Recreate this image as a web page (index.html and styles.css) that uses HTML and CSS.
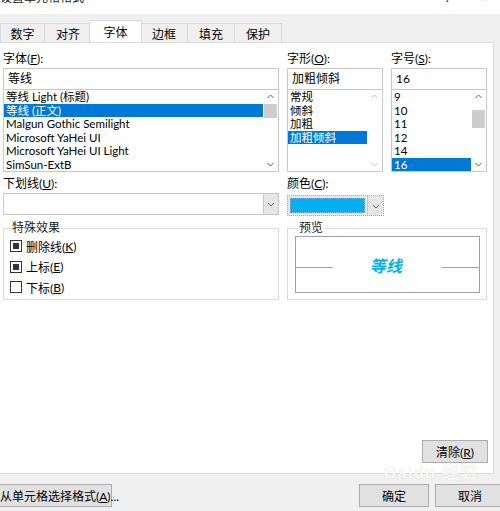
FILE: index.html
```html
<!DOCTYPE html>
<html lang="zh-CN">
<head>
<meta charset="utf-8">
<link rel="stylesheet" href="styles.css">
</head>
<body>
<div class="dialog">
  <div class="titlebar">
    <span class="title">设置单元格格式</span>
    <span class="tb-icons"><span class="help">?</span><span class="close">×</span></span>
  </div>
  <div class="tabstrip">
    <div class="tab">数字</div>
    <div class="tab">对齐</div>
    <div class="tab active">字体</div>
    <div class="tab">边框</div>
    <div class="tab">填充</div>
    <div class="tab">保护</div>
  </div>
  <div class="panel">
    <div class="row1">
      <div class="col">
        <div class="label">字体(<u>F</u>):</div>
        <div class="input">等线</div>
        <div class="list">
          <div class="items">
            <div class="item">等线 Light (标题)</div>
            <div class="item sel">等线 (正文)</div>
            <div class="item">Malgun Gothic Semilight</div>
            <div class="item">Microsoft YaHei UI</div>
            <div class="item">Microsoft YaHei UI Light</div>
            <div class="item">SimSun-ExtB</div>
          </div>
          <div class="scroll">
            <svg class="arr" width="15" height="13" viewBox="0 0 15 13"><polyline points="4.5,8 7.5,5 10.5,8" fill="none" stroke="#606060" stroke-width="1"/></svg>
            <div class="track"><div class="thumb t-font"></div></div>
            <svg class="arr" width="15" height="13" viewBox="0 0 15 13"><polyline points="4.5,5 7.5,8 10.5,5" fill="none" stroke="#606060" stroke-width="1"/></svg>
          </div>
        </div>
      </div>
      <div class="col">
        <div class="label">字形(<u>O</u>):</div>
        <div class="input">加粗倾斜</div>
        <div class="list">
          <div class="items">
            <div class="item">常规</div>
            <div class="item">倾斜</div>
            <div class="item">加粗</div>
            <div class="item sel">加粗倾斜</div>
          </div>
          <div class="scroll">
            <svg class="arr" width="15" height="13" viewBox="0 0 15 13"><polyline points="4.5,8 7.5,5 10.5,8" fill="none" stroke="#c4c4c4" stroke-width="1"/></svg>
            <div class="track"></div>
            <svg class="arr" width="15" height="13" viewBox="0 0 15 13"><polyline points="4.5,5 7.5,8 10.5,5" fill="none" stroke="#c4c4c4" stroke-width="1"/></svg>
          </div>
        </div>
      </div>
      <div class="col">
        <div class="label">字号(<u>S</u>):</div>
        <div class="input">16</div>
        <div class="list">
          <div class="items">
            <div class="item">9</div>
            <div class="item">10</div>
            <div class="item">11</div>
            <div class="item">12</div>
            <div class="item">14</div>
            <div class="item sel">16</div>
          </div>
          <div class="scroll">
            <svg class="arr" width="15" height="13" viewBox="0 0 15 13"><polyline points="4.5,8 7.5,5 10.5,8" fill="none" stroke="#606060" stroke-width="1"/></svg>
            <div class="track"><div class="thumb t-size"></div></div>
            <svg class="arr" width="15" height="13" viewBox="0 0 15 13"><polyline points="4.5,5 7.5,8 10.5,5" fill="none" stroke="#606060" stroke-width="1"/></svg>
          </div>
        </div>
      </div>
    </div>

    <div class="row2">
      <div class="col">
        <div class="label">下划线(<u>U</u>):</div>
        <div class="combo">
          <div class="combo-val"></div>
          <div class="drop"><svg width="14" height="20" viewBox="0 0 14 20"><polyline points="4,9 7,12 10,9" fill="none" stroke="#606060" stroke-width="1"/></svg></div>
        </div>
      </div>
      <div class="col">
        <div class="label">颜色(<u>C</u>):</div>
        <div class="combo color">
          <div class="swatch-wrap"><div class="swatch"></div></div>
          <div class="drop"><svg width="14" height="20" viewBox="0 0 14 20"><polyline points="4,9 7,12 10,9" fill="none" stroke="#606060" stroke-width="1"/></svg></div>
        </div>
      </div>
    </div>

    <div class="row3">
      <fieldset class="group effects">
        <legend>特殊效果</legend>
        <div class="check"><span class="box mixed"></span>删除线(<u>K</u>)</div>
        <div class="check"><span class="box mixed"></span>上标(<u>E</u>)</div>
        <div class="check"><span class="box"></span>下标(<u>B</u>)</div>
      </fieldset>
      <fieldset class="group preview">
        <legend>预览</legend>
        <div class="pbox">
          <span class="line"></span>
          <span class="ptext">等线</span>
          <span class="line"></span>
        </div>
      </fieldset>
    </div>

    <div class="clear-row">
      <button class="btn clear">清除(<u>R</u>)</button>
    </div>
  </div>
  <div class="footer">
    <button class="btn pick">从单元格选择格式(<u>A</u>)...</button>
    <div class="spacer"></div>
    <button class="btn ok">确定</button>
    <button class="btn cancel">取消</button>
  </div>
  <div class="watermark"><span class="wm-big">Bai<span class="wm-paw">du</span> 经验</span></div>
</div>
</body>
</html>
```

FILE: styles.css
```css
* { box-sizing: border-box; }
html, body { margin: 0; padding: 0; }
body {
  width: 500px;
  height: 511px;
  overflow: hidden;
  background: #f0f0f0;
  font-family: Lato, "Noto Sans CJK SC", sans-serif;
  font-size: 12px;
  color: #000;
}
.dialog { position: relative; width: 500px; height: 511px; }
.titlebar {
  height: 14px;
  background: #fff;
  position: relative;
  overflow: hidden;
}
.title {
  position: absolute;
  left: 0;
  top: -9px;
  font-size: 12px;
  line-height: 14px;
  color: #222;
}
.tb-icons { position: absolute; right: 12px; top: -10px; font-size: 13px; line-height: 14px; color: #333; }
.help { margin-right: 30px; }
.tabstrip {
  height: 28px;
  display: flex;
  align-items: flex-end;
}
.tab {
  width: 48px;
  height: 19px;
  border: 1px solid #d9d9d9;
  border-bottom: none;
  margin-right: -1px;
  display: flex;
  align-items: center;
  justify-content: center;
  background: #f0f0f0;
  font-size: 12px;
}
.tab:first-child { width: 45px; }
.tab.active {
  height: 22px;
  width: 53px;
  background: #fff;
  margin: 0 -2px 0 -2px;
  position: relative;
  z-index: 1;
}
.panel {
  width: 494px;
  height: 432px;
  background: #fff;
  border: 1px solid #dcdcdc;
  border-left: none;
  padding: 9px 0 0 3px;
  display: flex;
  flex-direction: column;
}
.row1 {
  display: grid;
  grid-template-columns: 276px 96px 96px;
  column-gap: 8px;
}
.label { height: 16px; line-height: 14px; font-size: 12px; }
.input {
  height: 22px;
  border: 1px solid #c8c8c8;
  padding-left: 4px;
  line-height: 20px;
  font-size: 12px;
}
.list {
  height: 83px;
  border: 1px solid #c8c8c8;
  margin-top: -1px;
  display: flex;
  overflow: hidden;
}
.items { flex: 1; min-width: 0; }
.item {
  height: 13.5px;
  line-height: 13.5px;
  padding-left: 2px;
  white-space: nowrap;
  font-size: 11.5px;
  overflow: hidden;
}
.item.sel { background: #0078d7; color: #fff; }
.scroll {
  width: 15px;
  display: flex;
  flex-direction: column;
  background: #fff;
}
.arr { display: block; flex: none; }
.track { flex: 1; position: relative; }
.thumb { position: absolute; left: 1px; right: 1px; background: #cdcdcd; }
.t-font { top: 1px; height: 14px; }
.t-size { top: 7px; height: 18px; }

.row2 {
  display: grid;
  grid-template-columns: 276px 96px;
  column-gap: 8px;
  margin-top: 5px;
}
.combo {
  height: 22px;
  border: 1px solid #c8c8c8;
  display: flex;
}
.combo-val { flex: 1; }
.drop {
  width: 15px;
  background: #e6e6e6;
  border-left: 1px solid #c8c8c8;
  display: flex;
  align-items: center;
  justify-content: center;
}
.combo.color { width: 97px; height: 21px; margin-top: 2px; background: #e6e6e6; border: 1px dotted #b0b0b0; }
.swatch-wrap { flex: 1; padding: 2px; border-right: 1px solid #c8c8c8; }
.swatch { height: 100%; background: #00b0f0; border: 1px dotted #7fb9d8; }
.combo.color .drop { border-left: none; }

.row3 {
  display: grid;
  grid-template-columns: 276px 200px;
  column-gap: 8px;
  margin-top: 5px;
}
.group {
  margin: 0;
  border: 1px solid #dcdcdc;
  height: 79px;
  padding: 0;
  min-width: 0;
}
.group legend {
  padding: 0;
  margin-left: 2px;
  font-size: 12px;
  line-height: 14px;
  color: #222;
}
.effects { padding: 1px 0 0 6px; }
.check {
  height: 20.5px;
  display: flex;
  align-items: center;
  font-size: 12px;
}
.box {
  width: 12px;
  height: 12px;
  border: 1px solid #333;
  margin-right: 4px;
  display: flex;
  align-items: center;
  justify-content: center;
}
.box.mixed::after {
  content: "";
  width: 6px;
  height: 6px;
  background: #333;
}
.preview { padding: 0 6px 0 7px; }
.group.preview legend { margin-left: 4px; }
.pbox {
  margin-top: 1px;
  height: 57px;
  border: 1px solid #a0a0a0;
  display: flex;
  align-items: center;
}
.line { width: 37px; height: 1px; background: #a0a0a0; margin-top: 6px; }
.ptext {
  flex: 1;
  text-align: center;
  color: #00b0f0;
  font-weight: bold;
  font-size: 16px;
  font-family: "Noto Sans CJK SC", sans-serif;
  transform: skewX(-12deg);
}
.clear-row {
  display: flex;
  justify-content: flex-end;
  margin-top: 140px;
  padding-right: 5px;
}
.btn {
  font-family: Lato, "Noto Sans CJK SC", sans-serif;
  font-size: 12px;
  background: #e1e1e1;
  border: 1px solid #adadad;
  height: 23px;
  padding: 0;
  color: #000;
}
.clear { width: 66px; }
.footer {
  height: 38px;
  display: flex;
  align-items: flex-start;
  padding-top: 10px;
}
.pick { width: 113px; margin-left: -1px; white-space: nowrap; }
.spacer { flex: 1; }
.ok { width: 70px; margin-right: 6px; }
.cancel { width: 70px; margin-right: -5px; }
.watermark {
  position: absolute;
  left: 384px;
  top: 466px;
  color: rgba(255,255,255,0.85);
  text-shadow: 0 0 1px rgba(160,160,160,0.4);
  pointer-events: none;
}
.wm-big { display: block; font-family: "Liberation Sans", "Noto Sans CJK SC", sans-serif; font-weight: bold; font-size: 17px; line-height: 14px; letter-spacing: 1px; }
```
